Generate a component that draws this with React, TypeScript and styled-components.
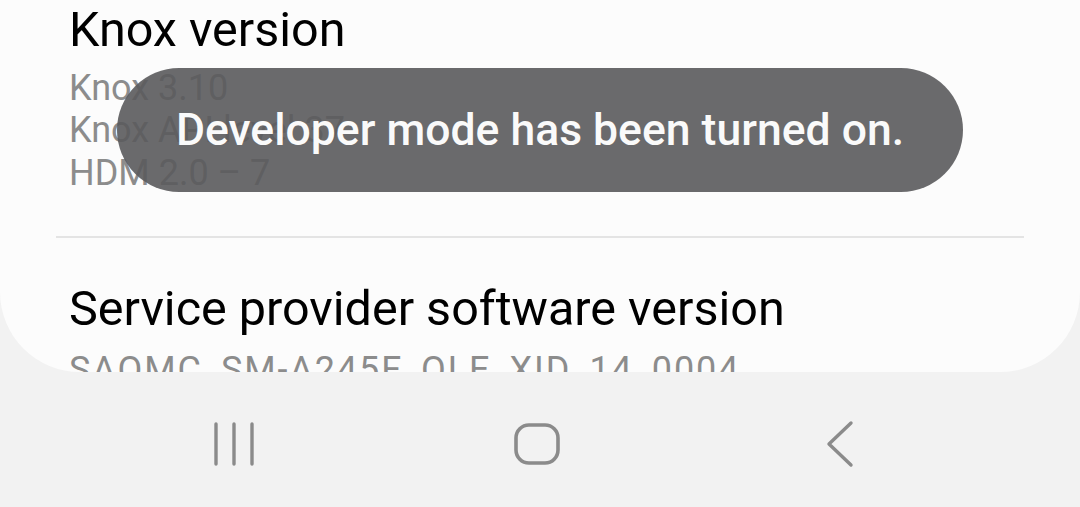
import React from "react";
import styled, { createGlobalStyle } from "styled-components";

const Global = createGlobalStyle`
  html, body { margin: 0; padding: 0; }
  body {
    width: 1080px;
    height: 507px;
    overflow: hidden;
    background: #f2f2f2;
    font-family: Roboto, "Noto Sans", sans-serif;
  }
`;

const Screen = styled.div`
  position: relative;
  width: 1080px;
  height: 507px;
  display: flex;
  flex-direction: column;
  background: #f2f2f2;
`;

const Card = styled.div`
  height: 372px;
  flex: none;
  background: #fcfcfc;
  border-radius: 0 0 80px 80px;
  overflow: hidden;
  padding: 2px 56px 0;
  box-sizing: border-box;
`;

const Item = styled.div`
  padding: 0 13px;
  display: flex;
  flex-direction: column;
`;

const Title = styled.div<{ $top?: number }>`
  font-size: 48.5px;
  line-height: 56px;
  color: #000;
  margin-top: ${(p) => p.$top ?? 0}px;
  white-space: nowrap;
`;

const SubGroup = styled.div<{ $top: number }>`
  margin-top: ${(p) => p.$top}px;
  display: flex;
  flex-direction: column;
`;

const Sub = styled.div<{ $spacing?: number }>`
  font-size: 36px;
  line-height: 42.5px;
  color: #8c8c8c;
  white-space: pre;
  letter-spacing: ${(p) => p.$spacing ?? 0}px;
`;

const Divider = styled.div<{ $top: number }>`
  height: 2px;
  background: #e4e4e4;
  margin-top: ${(p) => p.$top}px;
`;

const Toast = styled.div`
  position: absolute;
  left: 117px;
  top: 68px;
  width: 846px;
  height: 124px;
  border-radius: 62px;
  background: rgba(90, 90, 92, 0.9);
  color: #fafafa;
  font-size: 44.5px;
  font-weight: 500;
  display: flex;
  align-items: center;
  justify-content: center;
  white-space: nowrap;
`;

const NavBar = styled.div`
  flex: 1;
  display: flex;
  justify-content: center;
  align-items: center;
  padding: 9px 6px 0 0;
`;

const NavButton = styled.div`
  width: 303px;
  display: flex;
  justify-content: center;
  align-items: center;
  height: 60px;
`;

const RecentsIcon = () => (
  <svg width="44" height="46" viewBox="0 0 44 46">
    <g stroke="#8b8b8b" strokeWidth="3.4" strokeLinecap="round">
      <line x1="4" y1="3" x2="4" y2="43" />
      <line x1="22" y1="3" x2="22" y2="43" />
      <line x1="40" y1="3" x2="40" y2="43" />
    </g>
  </svg>
);

const HomeIcon = () => (
  <svg width="46" height="42" viewBox="0 0 46 42">
    <rect x="2" y="2" width="42" height="38" rx="13" fill="none" stroke="#8b8b8b" strokeWidth="3.6" />
  </svg>
);

const BackIcon = () => (
  <svg width="30" height="48" viewBox="0 0 30 48">
    <polyline points="26,3 4,24 26,45" fill="none" stroke="#8b8b8b" strokeWidth="3.4" strokeLinecap="round" strokeLinejoin="round" />
  </svg>
);

export default function App() {
  return (
    <>
      <Global />
      <Screen>
        <Card>
          <Item>
            <Title>Knox version</Title>
            <SubGroup $top={8.5}>
              <Sub>Knox 3.10</Sub>
              <Sub>Knox API level 37</Sub>
              <Sub>HDM 2.0 – 7</Sub>
            </SubGroup>
          </Item>
          <Divider $top={42} />
          <Item>
            <Title $top={43}>Service provider software version</Title>
            <SubGroup $top={12}>
              <Sub $spacing={1.9}>SAOMC_SM-A245F_OLE_XID_14_0004</Sub>
            </SubGroup>
          </Item>
        </Card>
        <NavBar>
          <NavButton>
            <RecentsIcon />
          </NavButton>
          <NavButton>
            <HomeIcon />
          </NavButton>
          <NavButton>
            <BackIcon />
          </NavButton>
        </NavBar>
        <Toast>Developer mode has been turned on.</Toast>
      </Screen>
    </>
  );
}
